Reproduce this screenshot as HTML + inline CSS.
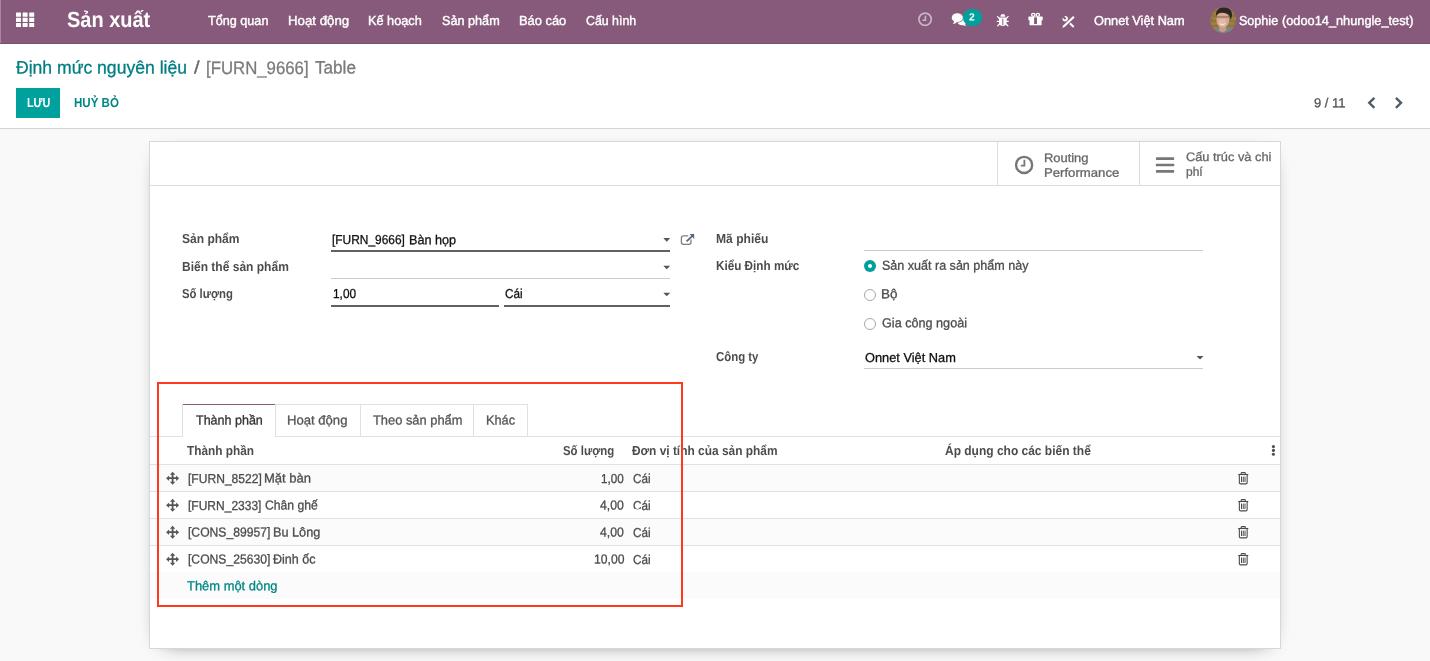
<!DOCTYPE html>
<html lang="vi">
<head>
<meta charset="utf-8">
<title>Định mức nguyên liệu - Odoo</title>
<style>
*{box-sizing:border-box;margin:0;padding:0}
html,body{width:1430px;height:661px;overflow:hidden}
body{font-family:"Liberation Sans",sans-serif;font-size:13px;color:#4c4c4c;background:#f9f9f9;position:relative}
.x{position:absolute;white-space:pre;line-height:1;transform-origin:0 0;font-family:"Liberation Sans",sans-serif}
.b{position:absolute}
.tx{position:absolute;left:0;top:0;width:1430px;height:661px;will-change:transform}
svg{position:absolute;overflow:visible}
#nav{left:0;top:0;width:1430px;height:44px;background:#875a7b;border-bottom:1px solid #7a506f}
#cp{left:0;top:44px;width:1430px;height:85px;background:#fff;border-bottom:1px solid #d4d4d4}
#save{left:16px;top:88px;width:44px;height:30px;background:#00a09d}
#sheet{left:149px;top:141px;width:1132px;height:508px;background:#fff;border:1px solid #d3d8de;box-shadow:0 5px 20px -15px #000}
.hl{position:absolute;height:1px;background:#dee2e6}
.vl{position:absolute;width:1px;background:#dee2e6}
.ud{position:absolute;height:2px;background:#616161}
.ul{position:absolute;height:1px;background:#ccc}
.caret{position:absolute;width:0;height:0;border-left:3.5px solid transparent;border-right:3.5px solid transparent;border-top:3.5px solid #555}
.radio{position:absolute;width:12px;height:12px;border-radius:50%;border:1px solid #a3a9b0;background:#fff}
.radio.on{border:none;background:#00a09d}
.radio.on:after{content:"";position:absolute;left:4px;top:4px;width:4px;height:4px;border-radius:50%;background:#fff}
.stripe{position:absolute;left:150px;width:1130px;background:#fbfbfb}
#red{left:157px;top:382px;width:526px;height:225px;border:2px solid #ff3a1c}
</style>
</head>
<body>
<div class="b" id="nav"></div>
<div class="b" style="left:0;top:0;width:1px;height:43px;background:rgba(255,255,255,.28)"></div>
<div class="b" id="cp"></div>
<div class="b" id="save"></div>
<div class="b" id="sheet"></div>

<!-- button box -->
<div class="hl" style="left:150px;top:185px;width:1130px;background:#d9dee3"></div>
<div class="vl" style="left:997px;top:142px;height:43px;background:#d9dee3"></div>
<div class="vl" style="left:1139px;top:142px;height:43px;background:#d9dee3"></div>

<!-- field underlines -->
<div class="ud" style="left:331px;top:250px;width:339px"></div>
<div class="ul" style="left:331px;top:278px;width:339px"></div>
<div class="ud" style="left:331px;top:305px;width:168px"></div>
<div class="ud" style="left:504px;top:305px;width:166px"></div>
<div class="ul" style="left:864px;top:250px;width:339px"></div>
<div class="ul" style="left:864px;top:368px;width:339px"></div>

<!-- radios -->
<div class="radio on" style="left:864px;top:260px"></div>
<div class="radio" style="left:864px;top:289px"></div>
<div class="radio" style="left:864px;top:318px"></div>

<!-- notebook tabs -->
<div class="hl" style="left:150px;top:436px;width:1130px"></div>
<div class="hl" style="left:182px;top:404px;width:346px"></div>
<div class="hl" style="left:182px;top:404px;width:94px;background:#875a7b"></div>
<div class="vl" style="left:182px;top:404px;height:32px"></div>
<div class="vl" style="left:275px;top:404px;height:32px"></div>
<div class="vl" style="left:360px;top:404px;height:32px"></div>
<div class="vl" style="left:473px;top:404px;height:32px"></div>
<div class="vl" style="left:527px;top:404px;height:32px"></div>
<div class="b" style="left:183px;top:436px;width:92px;height:1px;background:#fff"></div>

<!-- list -->
<div class="stripe" style="top:465px;height:26px"></div>
<div class="stripe" style="top:519px;height:26px"></div>
<div class="stripe" style="top:572px;height:27px"></div>
<div class="hl" style="left:150px;top:464px;width:1130px"></div>
<div class="hl" style="left:150px;top:491px;width:1130px"></div>
<div class="hl" style="left:150px;top:518px;width:1130px"></div>
<div class="hl" style="left:150px;top:545px;width:1130px"></div>

<svg width="1430" height="661" viewBox="0 0 1430 661" style="left:0;top:0">
 <defs><filter id="bl" x="-20%" y="-20%" width="140%" height="140%"><feGaussianBlur stdDeviation=".7"/></filter><clipPath id="av"><circle cx="1223.2" cy="20.1" r="12.9"/></clipPath></defs>
 <!-- apps grid -->
 <g fill="#fff">
  <rect x="16" y="12.6" width="5" height="4.1" rx=".5"/><rect x="22.6" y="12.6" width="5" height="4.1" rx=".5"/><rect x="29.2" y="12.6" width="5" height="4.1" rx=".5"/>
  <rect x="16" y="17.8" width="5" height="4.1" rx=".5"/><rect x="22.6" y="17.8" width="5" height="4.1" rx=".5"/><rect x="29.2" y="17.8" width="5" height="4.1" rx=".5"/>
  <rect x="16" y="23" width="5" height="4.1" rx=".5"/><rect x="22.6" y="23" width="5" height="4.1" rx=".5"/><rect x="29.2" y="23" width="5" height="4.1" rx=".5"/>
 </g>
 <!-- nav clock (muted) -->
 <g fill="none" stroke="#fff" stroke-opacity=".55" stroke-width="1.7">
  <circle cx="925.1" cy="19.3" r="6.15"/>
  <path d="M925.4 15.8V20.2H922.4" stroke-width="1.6"/>
 </g>
 <!-- comments -->
 <g>
  <ellipse cx="962.3" cy="21.6" rx="5" ry="3.600" fill="#fff"/>
  <path d="M964.2 24.200l2.500 2.100-4.300-1.200z" fill="#fff"/>
  <ellipse cx="957.3" cy="17.650" rx="6.300" ry="5" fill="#875a7b"/>
  <ellipse cx="957.3" cy="17.650" rx="5.600" ry="4.300" fill="#fff"/>
  <path d="M954 20.600c0 1.300-.3 2.400-1.100 3.400 1.700-.2 3.100-.9 4.200-2.100z" fill="#fff"/>
 </g>
 <!-- badge -->
 <rect x="962.9" y="8.9" width="19.3" height="17.2" rx="8.6" fill="#00a09d"/>
 <!-- bug -->
 <g>
  <path d="M1000.400 16.700a2.400 2.600 0 0 1 4.800 0z" fill="#fff"/>
  <path d="M999 17.400h7.600v4.600a3.800 3.900 0 0 1-7.600 0z" fill="#fff"/>
  <path d="M1002.800 18.700V25.200" stroke="#875a7b" stroke-width="1" fill="none"/>
  <g stroke="#fff" stroke-width="1.300" fill="none" stroke-linecap="round">
   <path d="M999.400 18.600l-1.800-2M1006.200 18.600l1.800-2M999.200 21.300h-1.900M1006.400 21.300h1.900M999.700 23.800l-1.900 1.900M1005.900 23.800l1.900 1.900"/>
  </g>
 </g>
 <!-- gift -->
 <g>
  <g fill="none" stroke="#fff" stroke-width="1.300"><ellipse cx="1033.3" cy="14.800" rx="1.700" ry="1.500"/><ellipse cx="1037.800" cy="14.800" rx="1.700" ry="1.500"/></g>
  <rect x="1028.400" y="16.500" width="14.300" height="3.700" rx=".4" fill="#fff"/>
  <rect x="1029.500" y="20" width="12.100" height="5.300" rx=".6" fill="#fff"/>
  <rect x="1034.100" y="17.400" width="2.900" height="6.600" fill="#875a7b"/>
 </g>
 <!-- tools -->
 <g>
  <path d="M1066 19.500L1073.700 27" stroke="#fff" stroke-width="2" fill="none"/>
  <circle cx="1065.2" cy="18.700" r="2.700" fill="#fff"/>
  <path d="M1065 18.400L1062.300 15.700" stroke="#875a7b" stroke-width="2.100" fill="none" stroke-linecap="round"/>
  <path d="M1061 29.200L1075 15.600" stroke="#875a7b" stroke-width="4.200" fill="none"/>
  <path d="M1074.660 17.490L1073.140 15.910L1063.440 25.280L1062.200 28L1064.960 26.860z" fill="#fff"/>
 </g>
 <!-- avatar -->
 <g clip-path="url(#av)"><g filter="url(#bl)">
  <rect x="1208" y="5" width="31" height="31" fill="#9c7f42"/>
  <path d="M1208 11h31M1208 16h31M1208 21h31M1208 26h31" stroke="#6f5a2e" stroke-width="1" opacity=".55"/>
  <path d="M1213 10v5M1234 12v4M1212 18v3M1235 22v4" stroke="#6f5a2e" stroke-width="1" opacity=".5"/>
  <ellipse cx="1224.500" cy="35" rx="11.500" ry="8.500" fill="#74878b"/>
  <path d="M1219.500 25h6l1 5.500-4 2-3.500-2z" fill="#c99a84"/>
  <ellipse cx="1222.800" cy="19.800" rx="6.400" ry="7.900" fill="#d7a993"/>
  <ellipse cx="1222.300" cy="22.600" rx="4" ry="3.800" fill="#e3b9a6"/>
  <path d="M1216 15.500c-.5-5 3-8.300 8-8.300 5 0 8.300 3 8 8.500l-1.300 4.300-1.200-4.500c-2-2.300-5-3-8-2.800-2.300.2-4 1.200-5.500 2.800z" fill="#2b2623"/>
  <path d="M1216.600 17h12.400" stroke="#4a3c3a" stroke-width="1.200" opacity=".55"/>
  <path d="M1219.800 23.600q2.400 1.900 5 0" stroke="#fff" stroke-width="1.100" fill="none" opacity=".75"/>
 </g></g>
 <!-- pager chevrons -->
 <g fill="none" stroke="#4f5b67" stroke-width="2.300">
  <path d="M1374.400 97.900L1369.200 102.850L1374.400 107.800"/>
  <path d="M1395.900 97.900L1401.100 102.850L1395.900 107.800"/>
 </g>
 <!-- stat clock -->
 <g fill="none" stroke="#777">
  <circle cx="1024.100" cy="164.900" r="8.050" stroke-width="2.400"/>
  <path d="M1024.400 159.800V165.700H1020.800" stroke-width="1.800"/>
 </g>
 <!-- bars -->
 <g fill="#777"><rect x="1155.900" y="157.300" width="18.300" height="2.700" rx=".7"/><rect x="1155.900" y="163.650" width="18.300" height="2.700" rx=".7"/><rect x="1155.900" y="170" width="18.300" height="2.700" rx=".7"/></g>
 <!-- external link -->
 <path d="M688.300 235.850H683.500a2.100 2.100 0 0 0-2.100 2.100v4.400a2.100 2.100 0 0 0 2.100 2.100h5.400a2.100 2.100 0 0 0 2.100-2.100v-2.900" fill="none" stroke="#76808b" stroke-width="1.300"/>
 <path d="M686.600 241.400L692.400 235.800" fill="none" stroke="#5b6773" stroke-width="1.800"/>
 <path d="M689.600 234h4.600v4.900z" fill="#5b6773"/>
 <!-- carets -->
 <g fill="#555"><path d="M663.3 238.100h6.900l-3.450 3.600z"/><path d="M663.3 265.700h6.900l-3.450 3.600z"/><path d="M663.3 292.700h6.900l-3.450 3.600z"/><path d="M1196.600 356h6.900l-3.450 3.600z"/></g>
 <!-- kebab -->
 <g fill="#4c4c4c"><circle cx="1273.400" cy="446.600" r="1.550"/><circle cx="1273.400" cy="450.400" r="1.550"/><circle cx="1273.400" cy="454.200" r="1.550"/></g>
 <!-- move handles & trash -->
 <defs>
  <g id="mv"><path d="M0-6.500L2.700-3.500H.9V-.9H3.500V-2.700L6.500 0L3.500 2.700V.9H.9V3.500H2.700L0 6.500L-2.700 3.500H-.9V.9H-3.500V2.700L-6.500 0L-3.500-2.700V-.9H-.9V-3.500H-2.700z" fill="#555"/></g>
  <g id="tr" fill="none" stroke="#4c4c4c" stroke-width="1.100">
   <path d="M-5.050-4H5.050"/>
   <path d="M-2.100-4.200V-5a.9.900 0 0 1 .9-.9H1.200a.9.900 0 0 1 .9.900V-4.200"/>
   <path d="M-3.900-3.800V4.100a1.300 1.300 0 0 0 1.300 1.300H2.600a1.300 1.300 0 0 0 1.300-1.300V-3.800"/>
   <path d="M-1.750-1.900V3.500M0-1.900V3.500M1.750-1.900V3.500" stroke-width="1"/>
  </g>
 </defs>
 <use href="#mv" x="172.600" y="478.200"/><use href="#mv" x="172.600" y="505.200"/><use href="#mv" x="172.600" y="532.200"/><use href="#mv" x="172.600" y="559.200"/>
 <use href="#tr" x="1243.250" y="478.5"/><use href="#tr" x="1243.250" y="505.5"/><use href="#tr" x="1243.250" y="532.5"/><use href="#tr" x="1243.250" y="559.5"/>
</svg>


<div class="tx">
<span class="x" style="left:67.30px;top:9px;font-size:22px;color:#fff;transform:translateY(0.25px) rotate(.03deg) scaleX(0.9072);font-weight:bold">Sản xuất</span>
<span class="x" style="left:208.10px;top:14px;font-size:13px;color:#fff;transform:translateY(0.0px) rotate(.03deg) scaleX(0.9720);-webkit-text-stroke:0.4px">Tổng quan</span>
<span class="x" style="left:287.68px;top:14px;font-size:13px;color:#fff;transform:translateY(0.0px) rotate(.03deg) scaleX(1.0194);-webkit-text-stroke:0.4px">Hoạt động</span>
<span class="x" style="left:368.22px;top:14px;font-size:13px;color:#fff;transform:translateY(0.0px) rotate(.03deg) scaleX(0.9795);-webkit-text-stroke:0.4px">Kế hoạch</span>
<span class="x" style="left:442.20px;top:14px;font-size:13px;color:#fff;transform:translateY(0.0px) rotate(.03deg) scaleX(0.9738);-webkit-text-stroke:0.4px">Sản phẩm</span>
<span class="x" style="left:518.81px;top:14px;font-size:13px;color:#fff;transform:translateY(0.0px) rotate(.03deg) scaleX(0.9898);-webkit-text-stroke:0.4px">Báo cáo</span>
<span class="x" style="left:586.20px;top:14px;font-size:13px;color:#fff;transform:translateY(0.0px) rotate(.03deg) scaleX(0.9499);-webkit-text-stroke:0.4px">Cấu hình</span>
<span class="x" style="left:1094.20px;top:14px;font-size:13px;color:#fff;transform:translateY(0.0px) rotate(.03deg) scaleX(0.9823);-webkit-text-stroke:0.4px">Onnet Việt Nam</span>
<span><span class="x" style="left:1239.30px;top:14px;font-size:13px;color:#fff;transform:translateY(0.0px) rotate(.03deg) scaleX(0.9665);-webkit-text-stroke:0.4px">Sophie</span> <span class="x" style="left:1282.30px;top:14px;font-size:13px;color:#fff;transform:translateY(0.0px) rotate(.03deg) scaleX(0.9828);-webkit-text-stroke:0.4px">(odoo14_nhungle_test)</span></span>
<span class="x" style="left:969.40px;top:11px;font-size:10.5px;color:#fff;transform:translateY(0.5px) rotate(.03deg) scaleX(0.9833);font-weight:bold">2</span>
<span class="x" style="left:16.30px;top:58px;font-size:18px;color:#017e84;transform:translateY(0.5px) rotate(.03deg) scaleX(0.9763);-webkit-text-stroke:0.3px">Định mức nguyên liệu</span>
<span class="x" style="left:193.70px;top:58px;font-size:18px;color:#5b6670;transform:translateY(0.5px) rotate(.03deg) scaleX(1.1200);-webkit-text-stroke:0.3px">/</span>
<span><span class="x" style="left:205.97px;top:58px;font-size:18px;color:#7b7b7b;transform:translateY(0.5px) rotate(.03deg) scaleX(0.9320);-webkit-text-stroke:0.3px">[FURN_9666]</span> <span class="x" style="left:315.00px;top:58px;font-size:18px;color:#7b7b7b;transform:translateY(0.5px) rotate(.03deg) scaleX(0.9507);-webkit-text-stroke:0.3px">Table</span></span>
<span class="x" style="left:26.90px;top:96px;font-size:13px;color:#fff;transform:translateY(0.25px) rotate(.03deg) scaleX(0.8332);font-weight:bold">LƯU</span>
<span class="x" style="left:73.90px;top:96px;font-size:13px;color:#008784;transform:translateY(0.25px) rotate(.03deg) scaleX(0.8881);font-weight:bold">HUỶ BỎ</span>
<span class="x" style="left:1313.50px;top:96px;font-size:13px;color:#555;transform:translateY(0.25px) rotate(.03deg) scaleX(0.9990);-webkit-text-stroke:0.3px">9 / 11</span>
<span><span class="x" style="left:1043.75px;top:152px;font-size:12.3px;color:#666;transform:translateY(0.0px) rotate(.03deg) scaleX(1.0494);-webkit-text-stroke:0.3px">Routing</span> <span class="x" style="left:1043.73px;top:166px;font-size:12.3px;color:#666;transform:translateY(0.75px) rotate(.03deg) scaleX(1.0696);-webkit-text-stroke:0.3px">Performance</span></span>
<span><span class="x" style="left:1185.80px;top:151px;font-size:12.3px;color:#666;transform:translateY(0.0px) rotate(.03deg) scaleX(1.0408);-webkit-text-stroke:0.3px">Cấu trúc và chi</span> <span class="x" style="left:1185.80px;top:165px;font-size:12.3px;color:#666;transform:translateY(0.75px) rotate(.03deg) scaleX(0.9730);-webkit-text-stroke:0.3px">phí</span></span>
<span class="x" style="left:182.30px;top:231px;font-size:13px;color:#4c4c4c;transform:translateY(0.75px) rotate(.03deg) scaleX(0.9258);font-weight:bold">Sản phẩm</span>
<span class="x" style="left:182.30px;top:260px;font-size:13px;color:#4c4c4c;transform:translateY(0.0px) rotate(.03deg) scaleX(0.9242);font-weight:bold">Biến thể sản phẩm</span>
<span class="x" style="left:182.30px;top:286px;font-size:13px;color:#4c4c4c;transform:translateY(0.75px) rotate(.03deg) scaleX(0.8711);font-weight:bold">Số lượng</span>
<span class="x" style="left:715.60px;top:231px;font-size:13px;color:#4c4c4c;transform:translateY(0.75px) rotate(.03deg) scaleX(0.9292);font-weight:bold">Mã phiếu</span>
<span class="x" style="left:715.70px;top:259px;font-size:13px;color:#4c4c4c;transform:translateY(0.0px) rotate(.03deg) scaleX(0.9008);font-weight:bold">Kiểu Định mức</span>
<span class="x" style="left:715.70px;top:350px;font-size:13px;color:#4c4c4c;transform:translateY(0.0px) rotate(.03deg) scaleX(0.8769);font-weight:bold">Công ty</span>
<span><span class="x" style="left:332.40px;top:233px;font-size:13px;color:#101010;transform:translateY(0.25px) rotate(.03deg) scaleX(0.9167);-webkit-text-stroke:0.3px">[FURN_9666]</span> <span class="x" style="left:409.03px;top:233px;font-size:13px;color:#101010;transform:translateY(0.25px) rotate(.03deg) scaleX(0.9724);-webkit-text-stroke:0.3px">Bàn họp</span></span>
<span class="x" style="left:332.70px;top:287px;font-size:13px;color:#101010;transform:translateY(0.25px) rotate(.03deg) scaleX(0.9134);-webkit-text-stroke:0.3px">1,00</span>
<span class="x" style="left:505.40px;top:287px;font-size:13px;color:#101010;transform:translateY(0.25px) rotate(.03deg) scaleX(0.9022);-webkit-text-stroke:0.3px">Cái</span>
<span class="x" style="left:865.00px;top:351px;font-size:13px;color:#101010;transform:translateY(0.0px) rotate(.03deg) scaleX(0.9845);-webkit-text-stroke:0.3px">Onnet Việt Nam</span>
<span class="x" style="left:881.80px;top:258px;font-size:13px;color:#4c4c4c;transform:translateY(0.75px) rotate(.03deg) scaleX(0.9648);-webkit-text-stroke:0.3px">Sản xuất ra sản phẩm này</span>
<span class="x" style="left:880.76px;top:287px;font-size:13px;color:#4c4c4c;transform:translateY(0.25px) rotate(.03deg) scaleX(1.0361);-webkit-text-stroke:0.3px">Bộ</span>
<span class="x" style="left:881.80px;top:316px;font-size:13px;color:#4c4c4c;transform:translateY(0.25px) rotate(.03deg) scaleX(0.9719);-webkit-text-stroke:0.3px">Gia công ngoài</span>
<span class="x" style="left:195.50px;top:413px;font-size:13px;color:#333;transform:translateY(0.5px) rotate(.03deg) scaleX(0.9629);-webkit-text-stroke:0.3px">Thành phần</span>
<span class="x" style="left:286.89px;top:413px;font-size:13px;color:#555;transform:translateY(0.5px) rotate(.03deg) scaleX(1.0075);-webkit-text-stroke:0.3px">Hoạt động</span>
<span class="x" style="left:372.80px;top:413px;font-size:13px;color:#555;transform:translateY(0.5px) rotate(.03deg) scaleX(0.9899);-webkit-text-stroke:0.3px">Theo sản phẩm</span>
<span class="x" style="left:485.62px;top:413px;font-size:13px;color:#555;transform:translateY(0.5px) rotate(.03deg) scaleX(0.9818);-webkit-text-stroke:0.3px">Khác</span>
<span class="x" style="left:187.10px;top:444px;font-size:13px;color:#4c4c4c;transform:translateY(0.0px) rotate(.03deg) scaleX(0.9089);font-weight:bold">Thành phần</span>
<span class="x" style="left:563.00px;top:444px;font-size:13px;color:#4c4c4c;transform:translateY(0.0px) rotate(.03deg) scaleX(0.8762);font-weight:bold">Số lượng</span>
<span class="x" style="left:632.40px;top:444px;font-size:13px;color:#4c4c4c;transform:translateY(0.0px) rotate(.03deg) scaleX(0.9165);font-weight:bold">Đơn vị tính của sản phẩm</span>
<span class="x" style="left:945.10px;top:444px;font-size:13px;color:#4c4c4c;transform:translateY(0.0px) rotate(.03deg) scaleX(0.9218);font-weight:bold">Áp dụng cho các biến thể</span>
<span><span class="x" style="left:187.55px;top:471px;font-size:13px;color:#4c4c4c;transform:translateY(0.5px) rotate(.03deg) scaleX(0.9288);-webkit-text-stroke:0.3px">[FURN_8522]</span> <span class="x" style="left:264.00px;top:471px;font-size:13px;color:#4c4c4c;transform:translateY(0.5px) rotate(.03deg) scaleX(1.0034);-webkit-text-stroke:0.3px">Mặt bàn</span></span>
<span><span class="x" style="left:187.60px;top:498px;font-size:13px;color:#4c4c4c;transform:translateY(0.5px) rotate(.03deg) scaleX(0.9243);-webkit-text-stroke:0.3px">[FURN_2333]</span> <span class="x" style="left:264.70px;top:498px;font-size:13px;color:#4c4c4c;transform:translateY(0.5px) rotate(.03deg) scaleX(0.9361);-webkit-text-stroke:0.3px">Chân ghế</span></span>
<span><span class="x" style="left:187.60px;top:525px;font-size:13px;color:#4c4c4c;transform:translateY(0.5px) rotate(.03deg) scaleX(0.9332);-webkit-text-stroke:0.3px">[CONS_89957]</span> <span class="x" style="left:272.82px;top:525px;font-size:13px;color:#4c4c4c;transform:translateY(0.5px) rotate(.03deg) scaleX(0.9766);-webkit-text-stroke:0.3px">Bu Lông</span></span>
<span><span class="x" style="left:187.60px;top:552px;font-size:13px;color:#4c4c4c;transform:translateY(0.5px) rotate(.03deg) scaleX(0.9332);-webkit-text-stroke:0.3px">[CONS_25630]</span> <span class="x" style="left:273.20px;top:552px;font-size:13px;color:#4c4c4c;transform:translateY(0.5px) rotate(.03deg) scaleX(0.9646);-webkit-text-stroke:0.3px">Đinh ốc</span></span>
<span class="x" style="left:601.40px;top:471px;font-size:13px;color:#4c4c4c;transform:translateY(0.5px) rotate(.03deg) scaleX(0.8974);-webkit-text-stroke:0.3px">1,00</span>
<span class="x" style="left:600.30px;top:498px;font-size:13px;color:#4c4c4c;transform:translateY(0.5px) rotate(.03deg) scaleX(0.9413);-webkit-text-stroke:0.3px">4,00</span>
<span class="x" style="left:600.30px;top:525px;font-size:13px;color:#4c4c4c;transform:translateY(0.5px) rotate(.03deg) scaleX(0.9413);-webkit-text-stroke:0.3px">4,00</span>
<span class="x" style="left:593.70px;top:552px;font-size:13px;color:#4c4c4c;transform:translateY(0.5px) rotate(.03deg) scaleX(0.9349);-webkit-text-stroke:0.3px">10,00</span>
<span class="x" style="left:632.60px;top:471px;font-size:13px;color:#4c4c4c;transform:translateY(0.5px) rotate(.03deg) scaleX(0.9022);-webkit-text-stroke:0.3px">Cái</span>
<span class="x" style="left:632.60px;top:498px;font-size:13px;color:#4c4c4c;transform:translateY(0.5px) rotate(.03deg) scaleX(0.9022);-webkit-text-stroke:0.3px">Cái</span>
<span class="x" style="left:632.60px;top:525px;font-size:13px;color:#4c4c4c;transform:translateY(0.5px) rotate(.03deg) scaleX(0.9022);-webkit-text-stroke:0.3px">Cái</span>
<span class="x" style="left:632.60px;top:552px;font-size:13px;color:#4c4c4c;transform:translateY(0.5px) rotate(.03deg) scaleX(0.9022);-webkit-text-stroke:0.3px">Cái</span>
<span class="x" style="left:187.00px;top:579px;font-size:13px;color:#008784;transform:translateY(0.25px) rotate(.03deg) scaleX(0.9943);-webkit-text-stroke:0.3px">Thêm một dòng</span>
</div>

<div class="b" id="red"></div>
</body>
</html>
